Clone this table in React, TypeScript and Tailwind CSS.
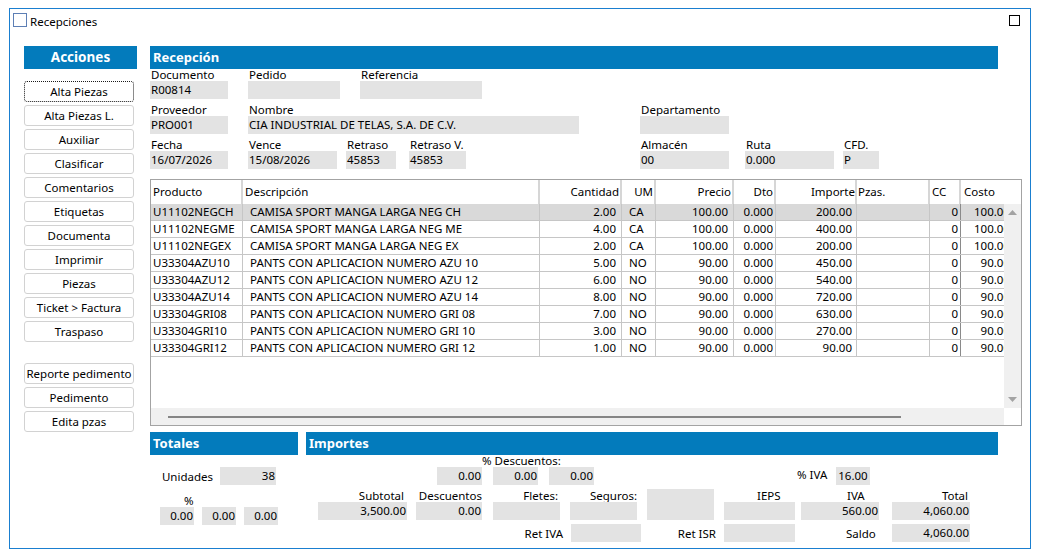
import React from 'react';

const BLUE = 'bg-[#037bbc]';

const ACTIONS = [
  'Alta Piezas',
  'Alta Piezas L.',
  'Auxiliar',
  'Clasificar',
  'Comentarios',
  'Etiquetas',
  'Documenta',
  'Imprimir',
  'Piezas',
  'Ticket > Factura',
  'Traspaso',
];

const ACTIONS_2 = ['Reporte pedimento', 'Pedimento', 'Edita pzas'];

// column geometry, taken from the grid in the screen
const COLS = [
  { label: 'Producto', w: 'w-[92px]', head: 'justify-start pl-[2px]', cell: 'justify-start pl-[2px]' },
  { label: 'Descripción', w: 'w-[297px]', head: 'justify-start pl-[2px]', cell: 'justify-start pl-[7px]' },
  { label: 'Cantidad', w: 'w-[82px]', head: 'justify-end pr-[1px]', cell: 'justify-end pr-[5px]' },
  { label: 'UM', w: 'w-[34px]', head: 'justify-end pr-[1px]', cell: 'justify-start pl-[7px]' },
  { label: 'Precio', w: 'w-[78px]', head: 'justify-end pr-[1px]', cell: 'justify-end pr-[5px]' },
  { label: 'Dto', w: 'w-[42px]', head: 'justify-end pr-[1px]', cell: 'justify-end pr-[2px]' },
  { label: 'Importe', w: 'w-[81px]', head: 'justify-end pr-[0px]', cell: 'justify-end pr-[4px]' },
  { label: 'Pzas.', w: 'w-[73px]', head: 'justify-start pl-[1px]', cell: 'justify-start' },
  { label: 'CC', w: 'w-[31px]', head: 'justify-start pl-[2px]', cell: 'justify-end pr-[2px]' },
];

const ROWS = [
  ['U11102NEGCH', 'CAMISA SPORT MANGA LARGA NEG CH', '2.00', 'CA', '100.00', '0.000', '200.00', '', '0', '100.00'],
  ['U11102NEGME', 'CAMISA SPORT MANGA LARGA NEG ME', '4.00', 'CA', '100.00', '0.000', '400.00', '', '0', '100.00'],
  ['U11102NEGEX', 'CAMISA SPORT MANGA LARGA NEG EX', '2.00', 'CA', '100.00', '0.000', '200.00', '', '0', '100.00'],
  ['U33304AZU10', 'PANTS CON APLICACION NUMERO AZU 10', '5.00', 'NO', '90.00', '0.000', '450.00', '', '0', '90.00'],
  ['U33304AZU12', 'PANTS CON APLICACION NUMERO AZU 12', '6.00', 'NO', '90.00', '0.000', '540.00', '', '0', '90.00'],
  ['U33304AZU14', 'PANTS CON APLICACION NUMERO AZU 14', '8.00', 'NO', '90.00', '0.000', '720.00', '', '0', '90.00'],
  ['U33304GRI08', 'PANTS CON APLICACION NUMERO GRI 08', '7.00', 'NO', '90.00', '0.000', '630.00', '', '0', '90.00'],
  ['U33304GRI10', 'PANTS CON APLICACION NUMERO GRI 10', '3.00', 'NO', '90.00', '0.000', '270.00', '', '0', '90.00'],
  ['U33304GRI12', 'PANTS CON APLICACION NUMERO GRI 12', '1.00', 'NO', '90.00', '0.000', '90.00', '', '0', '90.00'],
];

function Box({ className = '', children }: { className?: string; children?: React.ReactNode }) {
  return (
    <div className={`h-[18px] bg-[#e3e3e3] text-[11.5px] leading-[17px] whitespace-nowrap overflow-hidden ${className}`}>
      {children}
    </div>
  );
}

function Field({ label, value, className = '' }: { label: string; value?: string; className?: string }) {
  return (
    <div className={`flex flex-col ${className}`}>
      <div className="h-[12px] text-[11.5px] leading-[12px] pl-[1px] whitespace-nowrap">{label}</div>
      <Box className="pl-[1px]">{value}</Box>
    </div>
  );
}

function ActionButton({ label, focused }: { label: string; focused?: boolean }) {
  return (
    <div
      className={`w-[110px] h-[21px] flex items-center justify-center rounded-[3px] bg-white text-[11.5px] whitespace-nowrap ${
        focused ? 'border border-dotted border-[#1a1a1a]' : 'border border-[#d2d2d2]'
      }`}
    >
      {label}
    </div>
  );
}

function SectionHeader({ title, className = '' }: { title: string; className?: string }) {
  return (
    <div className={`${BLUE} h-[23px] flex items-center pl-[3px] text-white font-bold text-[13px] ${className}`}>
      {title}
    </div>
  );
}

function Grid() {
  return (
    <div className="mt-[10px] w-[872px] h-[247px] border border-[#a3a3a3] flex flex-col">
      {/* header */}
      <div className="h-[24px] flex bg-white text-[11.5px]">
        {COLS.map((c) => (
          <div key={c.label} className={`${c.w} h-full flex items-center border-r-2 border-[#d6d6d6] ${c.head}`}>
            {c.label}
          </div>
        ))}
        <div className="flex-1 h-full flex items-center pl-[3px]">Costo</div>
      </div>
      <div className="flex h-[204px]">
        <div className="w-[853px] h-full overflow-hidden">
          {ROWS.map((r, i) => (
            <div
              key={r[0]}
              className={`h-[17px] w-[900px] flex border-b border-[#c6c6c6] text-[11.5px] ${i === 0 ? 'bg-[#d9d9d9]' : ''}`}
            >
              {COLS.map((c, j) => (
                <div
                  key={c.label}
                  className={`${c.w} h-full flex items-center whitespace-nowrap border-r ${
                    j === COLS.length - 1 ? 'border-[#8a8a8a]' : 'border-[#c6c6c6]'
                  } ${c.cell}`}
                >
                  {r[j]}
                </div>
              ))}
              <div className="w-[52px] h-full flex items-center justify-end pr-[3px]">{r[9]}</div>
            </div>
          ))}
        </div>
        {/* vertical scrollbar */}
        <div className="w-[17px] h-full bg-[#f0f0f0] flex flex-col items-center justify-between py-[6px]">
          <svg width="9" height="5" viewBox="0 0 9 5">
            <path d="M0 5 L4.5 0 L9 5 Z" fill="#a3a3a3" />
          </svg>
          <svg width="9" height="5" viewBox="0 0 9 5">
            <path d="M0 0 L4.5 5 L9 0 Z" fill="#a3a3a3" />
          </svg>
        </div>
      </div>
      {/* horizontal scrollbar */}
      <div className="flex h-[17px]">
        <div className="w-[853px] h-full bg-[#f0f0f0] flex items-center pl-[17px]">
          <div className="w-[733px] h-[2px] bg-[#858585]" />
        </div>
        <div className="flex-1 h-full bg-white" />
      </div>
    </div>
  );
}

function Totales() {
  return (
    <div className="w-[148px] flex flex-col">
      <SectionHeader title="Totales" />
      <div className="mt-[12px] flex items-center">
        <div className="w-[63px] text-right text-[11.5px] leading-[17px]">Unidades</div>
        <Box className="ml-[7px] w-[56px] text-right pr-[1px]">38</Box>
      </div>
      <div className="mt-[10px] ml-[10px] w-[118px] flex flex-col">
        <div className="h-[12px] text-[11.5px] leading-[12px] pl-[24px]">%</div>
        <div className="flex gap-[8px]">
          <Box className="w-[34px] text-right pr-[1px]">0.00</Box>
          <Box className="w-[34px] text-right pr-[1px]">0.00</Box>
          <Box className="w-[34px] text-right pr-[1px]">0.00</Box>
        </div>
      </div>
    </div>
  );
}

function Col({
  label,
  value,
  w,
  className = '',
  labelClass = 'text-right pr-[3px]',
}: {
  label: string;
  value?: string;
  w: string;
  className?: string;
  labelClass?: string;
}) {
  return (
    <div className={`flex flex-col ${w} ${className}`}>
      <div className={`h-[12px] text-[11.5px] leading-[12px] whitespace-nowrap ${labelClass}`}>{label}</div>
      <Box className="text-right pr-[1px]">{value}</Box>
    </div>
  );
}

function Importes() {
  return (
    <div className="ml-[8px] w-[692px] flex flex-col">
      <SectionHeader title="Importes" />
      {/* row A */}
      <div className="flex items-end">
        <div className="ml-[131px] flex flex-col">
          <div className="h-[12px] pl-[45px] text-[11.5px] leading-[12px] whitespace-nowrap">% Descuentos:</div>
          <div className="flex gap-[11px]">
            <Box className="w-[45px] text-right pr-[1px]">0.00</Box>
            <Box className="w-[45px] text-right pr-[1px]">0.00</Box>
            <Box className="w-[45px] text-right pr-[1px]">0.00</Box>
          </div>
        </div>
        <div className="ml-[203px] h-[18px] text-[11.5px] leading-[16px] whitespace-nowrap">% IVA</div>
        <Box className="ml-[9px] w-[34px] pl-[2px]">16.00</Box>
      </div>
      {/* row B */}
      <div className="mt-[4px] flex items-end">
        <Col label="Subtotal" value="3,500.00" w="w-[89px]" className="ml-[12px]" />
        <Col label="Descuentos" value="0.00" w="w-[66px]" className="ml-[9px]" labelClass="text-right" />
        <Col label="Fletes:" value="" w="w-[67px]" className="ml-[11px]" labelClass="text-right pr-[2px]" />
        <Col label="Seguros:" value="" w="w-[67px]" className="ml-[10px]" labelClass="text-right" />
        <div className="ml-[10px] w-[67px] h-[31px] bg-[#e3e3e3]" />
        <Col label="IEPS" value="" w="w-[71px]" className="ml-[10px]" labelClass="pl-[33px]" />
        <Col label="IVA" value="560.00" w="w-[78px]" className="ml-[6px]" labelClass="pl-[46px]" />
        <Col label="Total" value="4,060.00" w="w-[78px]" className="ml-[13px]" labelClass="text-right pr-[2px]" />
      </div>
      {/* row C */}
      <div className="mt-[4px] flex items-center">
        <div className="ml-[210px] w-[47px] text-right text-[11.5px] leading-[17px] whitespace-nowrap">Ret IVA</div>
        <Box className="ml-[8px] w-[70px]" />
        <div className="ml-[23px] w-[52px] text-right text-[11.5px] leading-[17px] whitespace-nowrap">Ret ISR</div>
        <Box className="ml-[8px] w-[71px]" />
        <div className="ml-[51px] w-[34px] text-[11.5px] leading-[17px] whitespace-nowrap">Saldo</div>
        <Box className="ml-[12px] w-[78px] text-right pr-[1px]">4,060.00</Box>
      </div>
    </div>
  );
}

export default function App(): React.JSX.Element {
  return (
    <div className="w-[1044px] h-[559px] bg-white text-black font-['Noto_Sans',sans-serif] overflow-hidden">
      <div className="ml-[9px] mt-[8px] w-[1022px] h-[541px] border border-[#1a7fd0] flex flex-col">
        {/* title bar */}
        <div className="h-[37px] flex items-start pt-[4px] pl-[3px] pr-[10px]">
          <div className="w-[14px] h-[14px] border border-[#5d7fb5] bg-white" />
          <div className="ml-[3px] mt-[2px] text-[11.5px] leading-[14px]">Recepciones</div>
          <div className="ml-auto mt-[2px] w-[11px] h-[11px] border border-black" />
        </div>

        <div className="flex">
          {/* acciones */}
          <div className="ml-[14px] w-[113px] flex flex-col">
            <div className={`${BLUE} h-[23px] flex items-center justify-center text-white font-bold text-[13.5px]`}>
              Acciones
            </div>
            <div className="mt-[12px] flex flex-col gap-[3px]">
              {ACTIONS.map((a, i) => (
                <ActionButton key={a} label={a} focused={i === 0} />
              ))}
            </div>
            <div className="mt-[21px] flex flex-col gap-[3px]">
              {ACTIONS_2.map((a) => (
                <ActionButton key={a} label={a} />
              ))}
            </div>
          </div>

          {/* recepcion */}
          <div className="ml-[13px] flex flex-col">
            <SectionHeader title="Recepción" className="w-[848px]" />
            <div className="flex">
              <Field label="Documento" value="R00814" className="w-[78px]" />
              <Field label="Pedido" className="ml-[20px] w-[92px]" />
              <Field label="Referencia" className="ml-[20px] w-[122px]" />
            </div>
            <div className="mt-[5px] flex">
              <Field label="Proveedor" value="PRO001" className="w-[78px]" />
              <Field label="Nombre" value="CIA INDUSTRIAL DE TELAS, S.A. DE C.V." className="ml-[20px] w-[331px]" />
              <Field label="Departamento" className="ml-[61px] w-[89px]" />
            </div>
            <div className="mt-[5px] flex">
              <Field label="Fecha" value="16/07/2026" className="w-[78px]" />
              <Field label="Vence" value="15/08/2026" className="ml-[20px] w-[89px]" />
              <Field label="Retraso" value="45853" className="ml-[9px] w-[50px]" />
              <Field label="Retraso V." value="45853" className="ml-[13px] w-[57px]" />
              <Field label="Almacén" value="00" className="ml-[174px] w-[89px]" />
              <Field label="Ruta" value="0.000" className="ml-[16px] w-[89px]" />
              <Field label="CFD." value="P" className="ml-[9px] w-[36px]" />
            </div>

            <Grid />

            <div className="mt-[6px] flex">
              <Totales />
              <Importes />
            </div>
          </div>
        </div>
      </div>
    </div>
  );
}
